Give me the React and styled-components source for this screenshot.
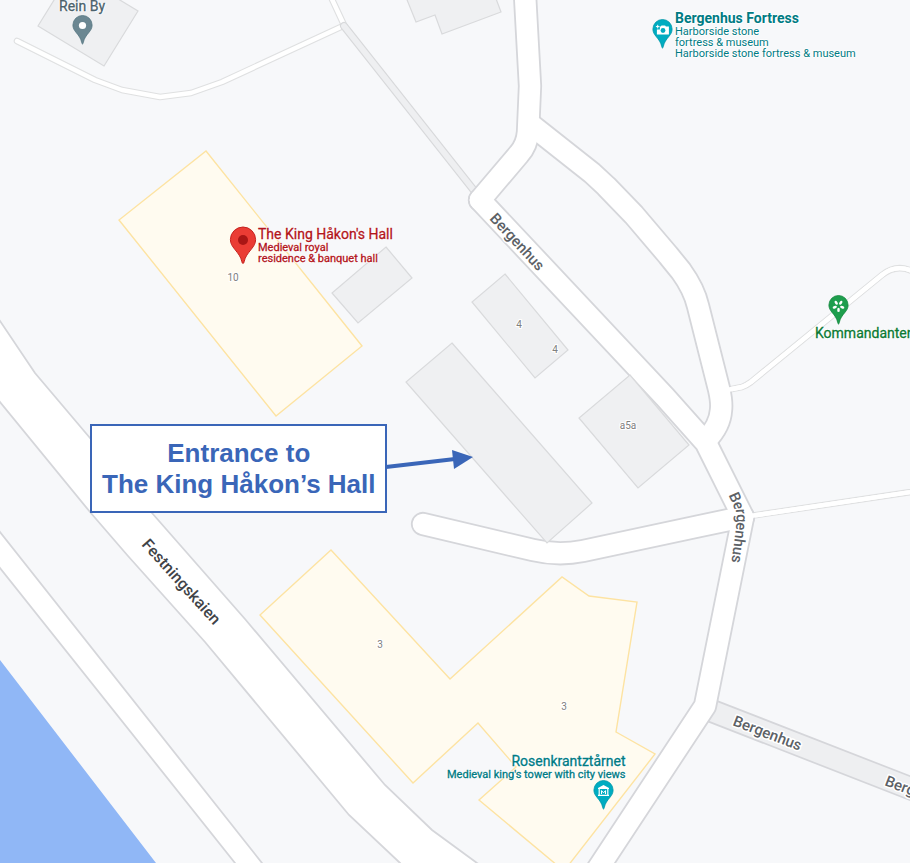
import React from "react";
import styled, { createGlobalStyle } from "styled-components";

const GlobalStyle = createGlobalStyle`
  * { box-sizing: border-box; }
  body { margin: 0; background: #f7f8fa; }
`;

const MapCanvas = styled.main`
  position: relative;
  width: 100%;
  height: 100vh;
  overflow: hidden;
  background: #f7f8fa;
  font-family: Roboto, "Noto Sans", sans-serif;
`;

const Terrain = styled.svg`
  position: absolute;
  inset: 0;
  width: 100%;
  height: 100%;
`;

const Water = styled.path`
  fill: #90b7f6;
`;

const Building = styled.path`
  fill: ${(p) => (p.$landmark ? "#fffbf0" : "#eff0f2")};
  stroke: ${(p) => (p.$landmark ? "#fde3a2" : "#d9dadc")};
  stroke-width: ${(p) => (p.$landmark ? 1.4 : 1.2)};
`;

const Road = styled.path`
  fill: none;
  stroke: ${(p) => p.$color};
  stroke-width: ${(p) => p.$width};
  stroke-linecap: round;
  stroke-linejoin: round;
`;

const RoadArea = styled.path`
  fill: #fff;
  stroke: #d5d6da;
  stroke-width: 1.8;
`;

const StreetName = styled.text`
  font-size: ${(p) => (p.$major ? 16 : 15)}px;
  font-weight: 500;
  fill: ${(p) => (p.$major ? "#3f4347" : "#5c6166")};
  stroke: #fff;
  stroke-width: 3;
  stroke-linejoin: round;
  paint-order: stroke;
`;

const HouseNumber = styled.text`
  font-size: 10px;
  fill: #808080;
  stroke: #fff;
  stroke-width: 2;
  paint-order: stroke;
  text-anchor: middle;
`;

const halo = "0 0 1px #fff, 1px 0 1px #fff, -1px 0 1px #fff, 0 1px 1px #fff, 0 -1px 1px #fff, 0 0 2px #fff";

const PlaceLabel = styled.div`
  position: absolute;
  left: ${(p) => p.$x}px;
  top: ${(p) => p.$y}px;
  color: ${(p) => p.$color};
  text-align: ${(p) => p.$align || "left"};
  text-shadow: ${halo};
  white-space: nowrap;
`;

const PlaceName = styled.div`
  font-size: 14px;
  line-height: 16px;
  font-weight: ${(p) => (p.$strong ? 700 : 400)};
  -webkit-text-stroke: ${(p) => (p.$strong ? "0" : "0.3px currentColor")};
`;

const PlaceDetail = styled.div`
  font-size: 11px;
  line-height: 11px;
  font-weight: 400;
  -webkit-text-stroke: ${(p) => (p.$strong ? "0.3px currentColor" : "0")};
`;

const PinIcon = styled.svg`
  position: absolute;
  left: ${(p) => p.$x}px;
  top: ${(p) => p.$y}px;
  overflow: visible;
`;

const Callout = styled.div`
  position: absolute;
  left: 90px;
  top: 424px;
  padding: 12px 9px 11px 10px;
  border: 2px solid #3a66b8;
  background: #fff;
  color: #3a66b8;
  font-family: "Liberation Sans", Arial, sans-serif;
  font-size: 26px;
  font-weight: 700;
  line-height: 31px;
  text-align: center;
  white-space: nowrap;
`;

const PATHS = {
  lane: "M480 200L665 397L706 443L743 517L705 706L595 873",
  north: "M525 -5L530 86L528 132Q527 145 519 154L480 200",
  loop: "M530 124L592 173L606 186L634 215L668 255L681 271Q694 289 698 306L719 389Q722 402 721 410Q720 426 706 440",
  deadEnd: "M423 524L533 550Q558 556 583 551L700 526L743 517",
};

const FOOTPATHS = [
  "M17 41L95 80L122 90L160 97L191 93L222 82L343 26",
  "M330 -5L344 25",
  "M727 390L742 387Q747 385 751 382L882 275Q897 263 914 272",
  "M750 516L1300 434",
];

const BUILDINGS = [
  "M38 26L104 66L138 11L72 -29Z",
  "M399 -20L416 22L435 15L442 34L501 12L489 -20Z",
  "M386 247L412 278L358 323L332 293Z",
  "M505 274L568 350L535 378L472 302Z",
  "M452 343L592 503L547 543L406 382Z",
  "M630 375L689 445L638 488L579 418Z",
];

const LANDMARKS = [
  "M206 151L362 346L276 416L119 220Z",
  "M331 550L450 679L562 577L589 596L637 602L616 732L655 754L564 871L479 800L516 767L478 723L413 783L260 615Z",
];

const NUMBERS = [
  ["10", 233, 281],
  ["4", 519, 328],
  ["4", 555, 353],
  ["a5a", 628, 429],
  ["3", 380, 648],
  ["3", 564, 710],
];

function Pin({ x, y, fill, edge, children }) {
  return (
    <PinIcon $x={x} $y={y} width="21" height="30" viewBox="-0.5 0 21 30" aria-hidden="true">
      <path
        d="M10 .5A9.6 9.6 0 0 0 .4 10.1C.4 13 1.6 15 3.4 17.2C6.2 20.6 8.5 23.5 9.2 27.6Q9.4 29 10 29Q10.6 29 10.8 27.6C11.5 23.5 13.8 20.6 16.6 17.2C18.4 15 19.6 13 19.6 10.1A9.6 9.6 0 0 0 10 .5Z"
        fill={fill}
        stroke={edge}
        strokeWidth=".8"
      />
      {children}
    </PinIcon>
  );
}

function Streets() {
  const streets = Object.values(PATHS);
  return (
    <g>
      {FOOTPATHS.map((d) => <Road key={d} d={d} $color="#dfe0e1" $width={6.6} />)}
      {FOOTPATHS.map((d) => <Road key={d} d={d} $color="#fff" $width={4.4} />)}
      <Road d="M344 26L476 193" $color="#d8d9db" $width={8} />
      <Road d="M344 26L476 193" $color="#eeeff1" $width={5.8} />
      <Road d="M712 711L1300 940" $color="#d5d6da" $width={24} />
      <Road d="M712 711L1300 940" $color="#eeeff1" $width={20.6} />
      {streets.map((d) => <Road key={d} d={d} $color="#d5d6da" $width={24.2} />)}
      {FOOTPATHS.slice(2).map((d) => <Road key={d} d={d} $color="#fff" $width={4.4} />)}
      {streets.map((d) => <Road key={d} d={d} $color="#fff" $width={20.6} />)}
      <RoadArea d="M-10 307L0 321L35 373L90 438L152 513L245 619L385 785L432 830L477 863L620 960L500 960L400 863L349 815L205 642L128 556L90 512L0 402L-10 390Z" />
      <RoadArea d="M-10 519L0 532L262 863L340 960L312 960L235 863L0 568L-10 555Z" />
    </g>
  );
}

export default function App() {
  return (
    <>
      <GlobalStyle />
      <MapCanvas>
        <Terrain role="img" aria-label="Map of Bergenhus">
          <Water d="M0 660L156 863L250 985H-10V647Z" />
          <Streets />
          {BUILDINGS.map((d) => <Building key={d} d={d} />)}
          {LANDMARKS.map((d) => <Building key={d} d={d} $landmark />)}
          {NUMBERS.map(([label, x, y]) => (
            <HouseNumber key={label + x} x={x} y={y}>{label}</HouseNumber>
          ))}
          <StreetName transform="translate(489 219) rotate(47)">Bergenhus</StreetName>
          <StreetName $major transform="translate(141 545) rotate(48)">Festningskaien</StreetName>
          <StreetName transform="translate(732 725) rotate(21)">Bergenhus</StreetName>
          <StreetName transform="translate(884 785) rotate(21)">Bergenhus</StreetName>
          <path id="bend" d="M733 493L741 511L742 521L734 580" fill="none" />
          <StreetName dominantBaseline="central"><textPath href="#bend">Bergenhus</textPath></StreetName>
          <path d="M386 467L455 459" stroke="#3a66b8" strokeWidth="4" />
          <path d="M452 450L473 457L454 469Z" fill="#3a66b8" />
        </Terrain>

        <Pin x={72} y={15} fill="#6b8792" edge="#567681">
          <circle cx="10" cy="10.5" r="3.6" fill="#fff" />
        </Pin>
        <PlaceLabel $x={59} $y={-2} $color="#4b626c"><PlaceName>Rein By</PlaceName></PlaceLabel>

        <Pin x={652} y={19} fill="#00acc1" edge="#0097a7">
          <path d="M7.4 7.6H8.2L9 6.4H12.6L13.4 7.6H16.4V15.6H4.4V10.4H7.4Z" fill="#fff" />
          <path d="M5.2 5.8V9.4M3.4 7.6H7" stroke="#fff" strokeWidth="1" />
          <circle cx="10.5" cy="11.5" r="2.4" fill="#00acc1" />
        </Pin>
        <PlaceLabel $x={675} $y={10} $color="#007b83">
          <PlaceName $strong>Bergenhus Fortress</PlaceName>
          <PlaceDetail>Harborside stone</PlaceDetail>
          <PlaceDetail>fortress &amp; museum</PlaceDetail>
          <PlaceDetail>Harborside stone fortress &amp; museum</PlaceDetail>
        </PlaceLabel>

        <PinIcon $x={229} $y={226} width="28" height="40" viewBox="0 0 28 40" aria-hidden="true">
          <path
            d="M14 1A12.6 12.6 0 0 0 1.4 13.6C1.4 17.5 3.2 20.1 5.6 23.1C9.1 27.5 11.8 30.5 12.9 35.8Q13.2 37.5 14 37.5Q14.8 37.5 15.1 35.8C16.2 30.5 18.9 27.5 22.4 23.1C24.8 20.1 26.6 17.5 26.6 13.6A12.6 12.6 0 0 0 14 1Z"
            fill="#ea3c34"
            stroke="#c5221f"
          />
          <circle cx="14" cy="14" r="5" fill="#a91615" />
        </PinIcon>
        <PlaceLabel $x={258} $y={226} $color="#b3151b">
          <PlaceName>The King Håkon's Hall</PlaceName>
          <PlaceDetail $strong>Medieval royal</PlaceDetail>
          <PlaceDetail $strong>residence &amp; banquet hall</PlaceDetail>
        </PlaceLabel>

        <Pin x={828} y={295} fill="#1e9e4d" edge="#12863c">
          <g fill="#fff">
            {[0, 72, 144, 216, 288].map((angle) => (
              <ellipse key={angle} cx="10" cy="14.9" rx="1.3" ry="2.2" transform={`rotate(${angle} 10 11)`} />
            ))}
          </g>
        </Pin>
        <PlaceLabel $x={815} $y={325} $color="#0b7a34"><PlaceName>Kommandanten</PlaceName></PlaceLabel>

        <Pin x={593} y={780} fill="#00acc1" edge="#0097a7">
          <path d="M4.5 8L10 5L15.5 8V9H4.5Z" fill="#fff" />
          <path d="M5.7 9V15M14.3 9V15M4.5 15.4H15.5" fill="none" stroke="#fff" strokeWidth="1.2" />
          <path d="M8 14V10.6L10 12.8L12 10.6V14" fill="none" stroke="#fff" strokeWidth="1" />
        </Pin>
        <PlaceLabel $x={447} $y={753} $color="#007b83" $align="right">
          <PlaceName>Rosenkrantztårnet</PlaceName>
          <PlaceDetail $strong>Medieval king's tower with city views</PlaceDetail>
        </PlaceLabel>

        <Callout>
          Entrance to<br />The King Håkon’s Hall
        </Callout>
      </MapCanvas>
    </>
  );
}
